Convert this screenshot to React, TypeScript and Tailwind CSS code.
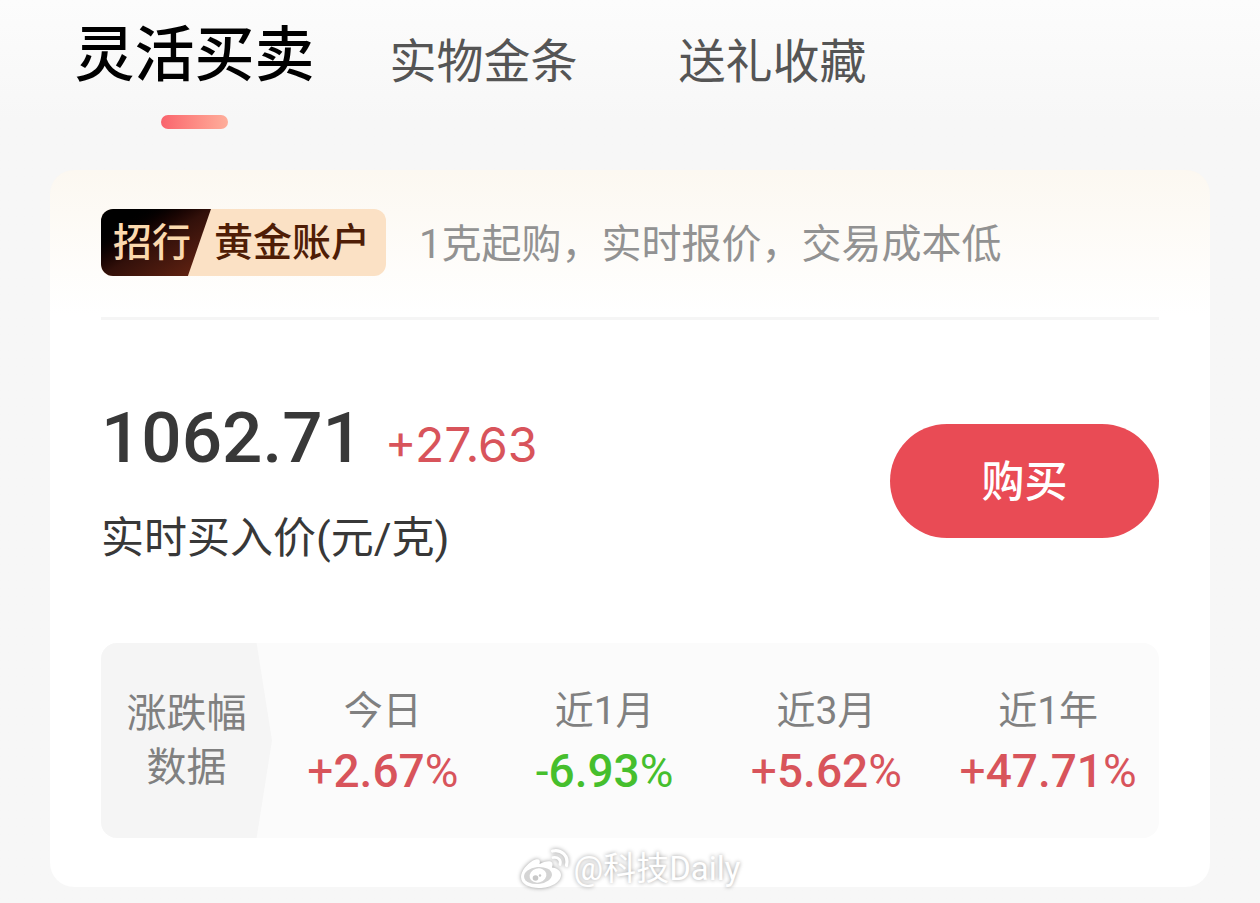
import React from "react";

const tabs = ["灵活买卖", "实物金条", "送礼收藏"];

const changes = [
  { label: "今日", sign: "+", value: "2.67" },
  { label: "近1月", sign: "-", value: "6.93" },
  { label: "近3月", sign: "+", value: "5.62" },
  { label: "近1年", sign: "+", value: "47.71" },
];

const TabBar = () => {
  return (
    <nav className="grid grid-cols-4 h-[170px] pl-[50px] pr-[54px]">
      {tabs.map((tab, i) =>
        i === 0 ? (
          <button key={tab} type="button" className="flex flex-col items-center pt-6 whitespace-nowrap">
            <span className="text-[60px] leading-[64px] font-medium text-black">{tab}</span>
            {/* Indicator */}
            <span className="mt-[27px] w-[67px] h-[14px] rounded-full bg-gradient-to-r from-[#f9636d] to-[#feae9b]"></span>
          </button>
        ) : (
          <button key={tab} type="button" className="flex flex-col items-center pt-[30px] whitespace-nowrap">
            <span className="text-[47px] leading-[64px] text-[#555]">{tab}</span>
          </button>
        )
      )}
    </nav>
  );
};

const AccountBadge = () => {
  return (
    <div className="relative flex items-center w-[285px] h-[67px] shrink-0 rounded-xl overflow-hidden bg-[#fbe1c5] text-[39px] leading-[48px] font-medium">
      {/* Dark slanted part */}
      <div className="absolute inset-y-0 left-0 w-[110px] bg-gradient-to-br from-black from-15% via-[#32100a] via-50% to-[#6b2612] [clip-path:polygon(0_0,100%_0,79%_100%,0_100%)]"></div>
      <span className="relative pl-3 w-[113px] text-[#fbd9ae]">招行</span>
      <span className="text-[#4f1d06]">黄金账户</span>
    </div>
  );
};

const ChangeTable = () => {
  return (
    <table className="w-full table-fixed border-collapse mt-[76px] rounded-2xl overflow-hidden bg-[#fbfbfb]">
      <tbody>
        <tr className="h-[97px]">
          <th
            rowSpan={2}
            scope="rowgroup"
            className="w-[171px] p-0 bg-[#f5f5f5] [clip-path:polygon(0_0,91%_0,100%_50%,91%_100%,0_100%)] text-[40px] leading-[54px] font-normal text-[#808080]"
          >
            涨跌幅
            <br />
            数据
          </th>
          {changes.map((c) => (
            <th key={c.label} scope="col" className="p-0 align-bottom text-[39px] leading-[58px] font-normal text-[#808080]">
              {c.label}
            </th>
          ))}
        </tr>
        <tr className="h-[98px]">
          {changes.map((c) => (
            <td
              key={c.label}
              className={`p-0 align-top text-center text-[46px] leading-[62px] ${c.sign === "+" ? "text-[#d8545b]" : "text-[#46bf2d]"}`}
            >
              {c.sign}
              <span className="font-medium">{c.value}</span>%
            </td>
          ))}
        </tr>
      </tbody>
    </table>
  );
};

const WeiboIcon = () => {
  return (
    <svg viewBox="0 0 50 42" className="w-[50px] h-[42px] overflow-visible drop-shadow-[0_0_2px_rgba(0,0,0,0.4)]" aria-hidden="true">
      <path
        d="M1 29C1 23 7 16 13 12.5C18 10 21 11 19.5 16C24 13.5 30 12 32 14.5C33 16 32.5 18 32 19.5C37 20 41 23 41 27C41 34 31 40 19 40C9 40 1 36 1 29Z"
        fill="#fff"
      />
      <ellipse cx="18" cy="27.5" rx="14" ry="8.5" fill="#d4d4d4" transform="rotate(-6 18 27.5)" />
      <ellipse cx="18" cy="27.5" rx="8.5" ry="7" fill="#fff" transform="rotate(-15 18 27.5)" />
      <circle cx="15.5" cy="30" r="2.8" fill="#c8c8c8" />
      <circle cx="20" cy="27.5" r="1.2" fill="#c8c8c8" />
      <path d="M32.5 3C41.5 1 49 8 46.5 17.5" fill="none" stroke="#fff" strokeWidth="3.2" strokeLinecap="round" />
      <path d="M33 9.5C38 8.5 41.5 12 40 16.5" fill="none" stroke="#fff" strokeWidth="2.8" strokeLinecap="round" />
    </svg>
  );
};

const App = () => {
  return (
    <div className="relative min-h-screen pb-4 bg-[#f7f7f7] bg-gradient-to-b from-[#fcfcfc] to-[#f7f7f7] to-[120px] font-['Roboto','Noto_Sans_CJK_SC',sans-serif]">
      <TabBar />

      {/* Card */}
      <main className="mx-[50px] px-[51px] pt-[39px] pb-[49px] rounded-3xl bg-white bg-gradient-to-b from-[#fcf8f1] to-white to-[145px]">
        <div className="flex items-center gap-[33px] pb-[41px] border-b-3 border-[#f5f5f5]">
          <AccountBadge />
          <p className="pt-1 text-[40px] leading-[48px] text-[#929292] whitespace-nowrap">1克起购，实时报价，交易成本低</p>
        </div>

        {/* Price */}
        <div className="flex items-center justify-between pt-[74px]">
          <div>
            <div className="flex items-baseline gap-[22px]">
              <span className="text-[71px] leading-[88px] font-medium text-[#383838]">1062.71</span>
              <span className="font-['Inter'] text-[48px] leading-[60px] text-[#d8545b]">+27.63</span>
            </div>
            <p className="mt-7 text-[43px] leading-[57px] text-[#383838]">实时买入价(元/克)</p>
          </div>
          <button type="button" className="w-[269px] h-[114px] pt-1 rounded-full bg-[#e94b55] text-[43px] font-medium text-white">
            购买
          </button>
        </div>

        <ChangeTable />
      </main>

      {/* Watermark */}
      <div className="absolute bottom-3 inset-x-0 flex items-center justify-center gap-1 text-white">
        <WeiboIcon />
        <span className="text-[33px] leading-[44px] [text-shadow:0_0_4px_rgba(0,0,0,0.4)]">@科技Daily</span>
      </div>
    </div>
  );
};

export default App;
